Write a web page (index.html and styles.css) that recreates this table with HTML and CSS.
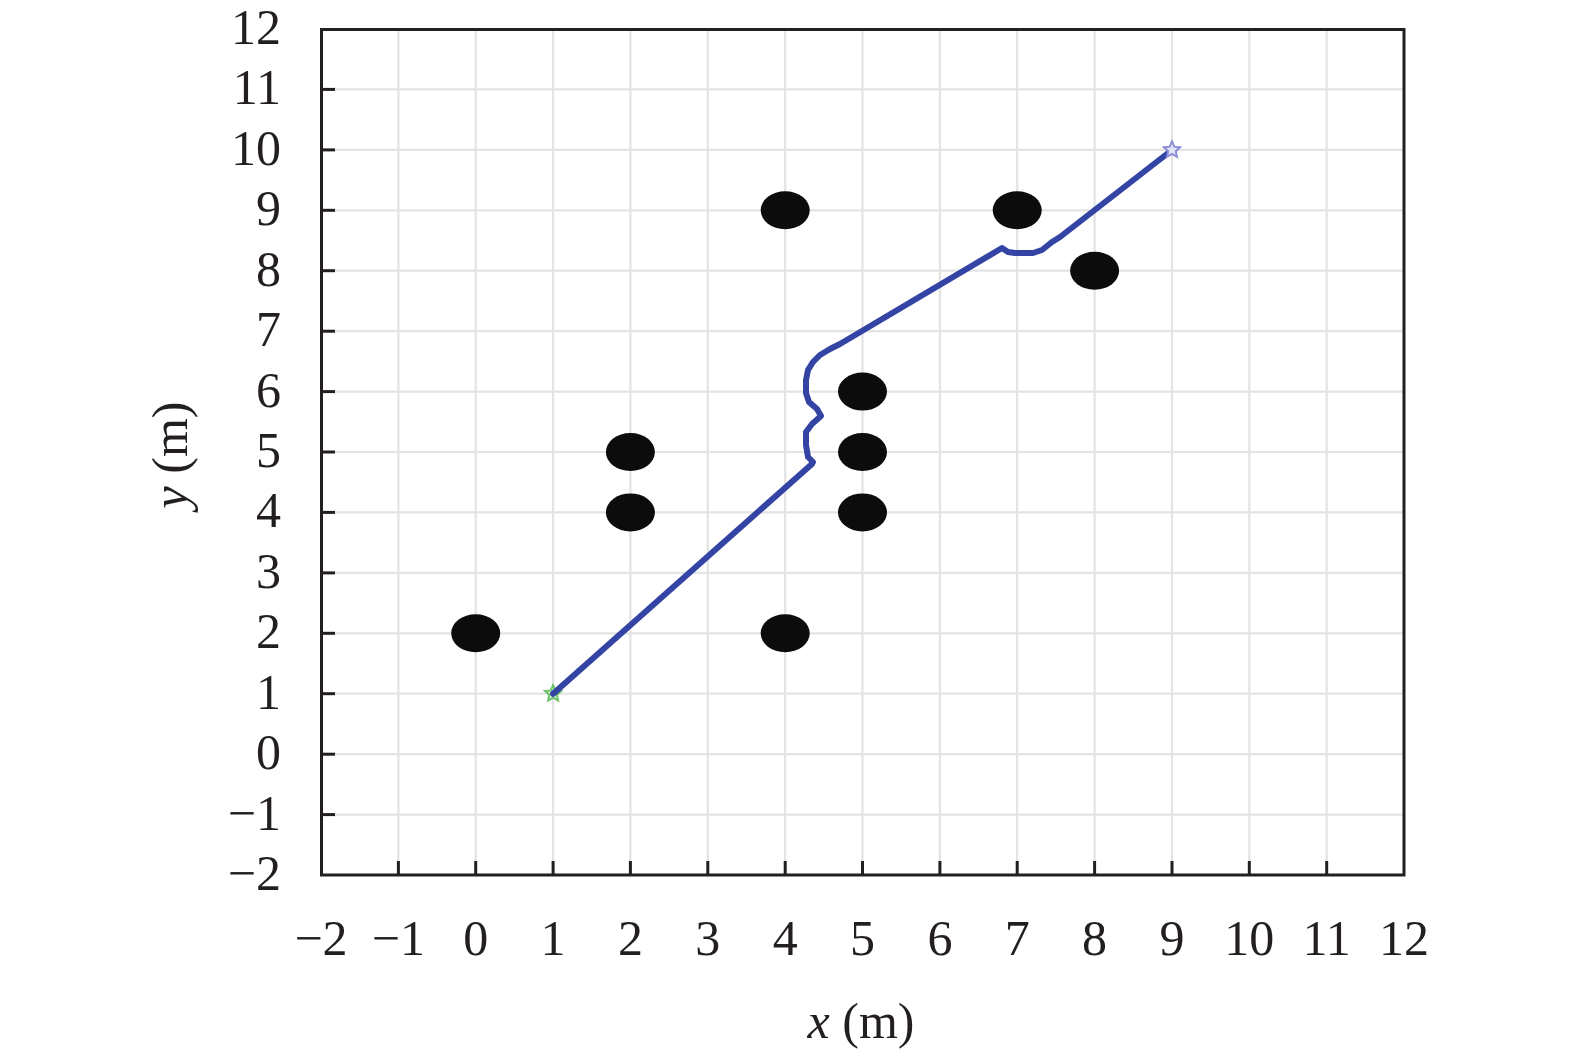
FILE: index.html
```html
<!DOCTYPE html>
<html lang="en">
<head>
<meta charset="utf-8">
<title>Path plot</title>
<link rel="stylesheet" href="styles.css">
</head>
<body>
<main class="figure">
<svg class="chart" viewBox="0 0 1575 1055" xmlns="http://www.w3.org/2000/svg">
  <g class="grid">
    <line x1="398.4" y1="29" x2="398.4" y2="875"/>
    <line x1="475.7" y1="29" x2="475.7" y2="875"/>
    <line x1="553.1" y1="29" x2="553.1" y2="875"/>
    <line x1="630.4" y1="29" x2="630.4" y2="875"/>
    <line x1="707.8" y1="29" x2="707.8" y2="875"/>
    <line x1="785.2" y1="29" x2="785.2" y2="875"/>
    <line x1="862.5" y1="29" x2="862.5" y2="875"/>
    <line x1="939.9" y1="29" x2="939.9" y2="875"/>
    <line x1="1017.2" y1="29" x2="1017.2" y2="875"/>
    <line x1="1094.6" y1="29" x2="1094.6" y2="875"/>
    <line x1="1172" y1="29" x2="1172" y2="875"/>
    <line x1="1249.3" y1="29" x2="1249.3" y2="875"/>
    <line x1="1326.7" y1="29" x2="1326.7" y2="875"/>
    <line x1="321" y1="89.4" x2="1404" y2="89.4"/>
    <line x1="321" y1="149.9" x2="1404" y2="149.9"/>
    <line x1="321" y1="210.3" x2="1404" y2="210.3"/>
    <line x1="321" y1="270.7" x2="1404" y2="270.7"/>
    <line x1="321" y1="331.2" x2="1404" y2="331.2"/>
    <line x1="321" y1="391.6" x2="1404" y2="391.6"/>
    <line x1="321" y1="452" x2="1404" y2="452"/>
    <line x1="321" y1="512.4" x2="1404" y2="512.4"/>
    <line x1="321" y1="572.9" x2="1404" y2="572.9"/>
    <line x1="321" y1="633.3" x2="1404" y2="633.3"/>
    <line x1="321" y1="693.7" x2="1404" y2="693.7"/>
    <line x1="321" y1="754.2" x2="1404" y2="754.2"/>
    <line x1="321" y1="814.6" x2="1404" y2="814.6"/>
  </g>

  <g class="ticks">
    <line x1="322" y1="89.4" x2="335" y2="89.4"/>
    <line x1="322" y1="149.9" x2="335" y2="149.9"/>
    <line x1="322" y1="210.3" x2="335" y2="210.3"/>
    <line x1="322" y1="270.7" x2="335" y2="270.7"/>
    <line x1="322" y1="331.2" x2="335" y2="331.2"/>
    <line x1="322" y1="391.6" x2="335" y2="391.6"/>
    <line x1="322" y1="452" x2="335" y2="452"/>
    <line x1="322" y1="512.4" x2="335" y2="512.4"/>
    <line x1="322" y1="572.9" x2="335" y2="572.9"/>
    <line x1="322" y1="633.3" x2="335" y2="633.3"/>
    <line x1="322" y1="693.7" x2="335" y2="693.7"/>
    <line x1="322" y1="754.2" x2="335" y2="754.2"/>
    <line x1="322" y1="814.6" x2="335" y2="814.6"/>
    <line x1="398.4" y1="874" x2="398.4" y2="861"/>
    <line x1="475.7" y1="874" x2="475.7" y2="861"/>
    <line x1="553.1" y1="874" x2="553.1" y2="861"/>
    <line x1="630.4" y1="874" x2="630.4" y2="861"/>
    <line x1="707.8" y1="874" x2="707.8" y2="861"/>
    <line x1="785.2" y1="874" x2="785.2" y2="861"/>
    <line x1="862.5" y1="874" x2="862.5" y2="861"/>
    <line x1="939.9" y1="874" x2="939.9" y2="861"/>
    <line x1="1017.2" y1="874" x2="1017.2" y2="861"/>
    <line x1="1094.6" y1="874" x2="1094.6" y2="861"/>
    <line x1="1172" y1="874" x2="1172" y2="861"/>
    <line x1="1249.3" y1="874" x2="1249.3" y2="861"/>
    <line x1="1326.7" y1="874" x2="1326.7" y2="861"/>
  </g>

  <rect class="frame" x="321.5" y="29.5" width="1082.5" height="845.5"/>

  <g class="obstacles">
    <ellipse cx="475.7" cy="633.3" rx="24.5" ry="19"/>
    <ellipse cx="630.4" cy="452" rx="24.5" ry="19"/>
    <ellipse cx="630.4" cy="512.4" rx="24.5" ry="19"/>
    <ellipse cx="785.2" cy="210.3" rx="24.5" ry="19"/>
    <ellipse cx="785.2" cy="633.3" rx="24.5" ry="19"/>
    <ellipse cx="862.5" cy="391.6" rx="24.5" ry="19"/>
    <ellipse cx="862.5" cy="452" rx="24.5" ry="19"/>
    <ellipse cx="862.5" cy="512.4" rx="24.5" ry="19"/>
    <ellipse cx="1017.2" cy="210.3" rx="24.5" ry="19"/>
    <ellipse cx="1094.6" cy="270.7" rx="24.5" ry="19"/>
  </g>

  <polygon class="start-mark" transform="translate(553.1 693.7)" points="0,-8.5 2.35,-3.24 8.08,-2.63 3.8,1.24 5,6.88 0,4 -5,6.88 -3.8,1.24 -8.08,-2.63 -2.35,-3.24"/>

  <polyline class="route" points="553.1,693.7 812,464 813,462 808,457 806,445 806,432 812,424 821,416 817,409 809,402 806,393 806,380 808,370 813,362 820,355 830,349 840,344 1002,248 1008,252 1015,253 1033,253 1042,250 1047,246 1052,242 1060,237 1172,150"/>

  <polygon class="end-mark" transform="translate(1172 149.9)" points="0,-8.5 2.35,-3.24 8.08,-2.63 3.8,1.24 5,6.88 0,4 -5,6.88 -3.8,1.24 -8.08,-2.63 -2.35,-3.24"/>

  <g class="xlabels">
    <text x="321" y="955">−2</text>
    <text x="398.4" y="955">−1</text>
    <text x="475.7" y="955">0</text>
    <text x="553.1" y="955">1</text>
    <text x="630.4" y="955">2</text>
    <text x="707.8" y="955">3</text>
    <text x="785.2" y="955">4</text>
    <text x="862.5" y="955">5</text>
    <text x="939.9" y="955">6</text>
    <text x="1017.2" y="955">7</text>
    <text x="1094.6" y="955">8</text>
    <text x="1172" y="955">9</text>
    <text x="1249.3" y="955">10</text>
    <text x="1326.7" y="955">11</text>
    <text x="1404" y="955">12</text>
  </g>

  <g class="ylabels">
    <text x="281" y="44">12</text>
    <text x="281" y="104.4">11</text>
    <text x="281" y="164.9">10</text>
    <text x="281" y="225.3">9</text>
    <text x="281" y="285.7">8</text>
    <text x="281" y="346.2">7</text>
    <text x="281" y="406.6">6</text>
    <text x="281" y="467">5</text>
    <text x="281" y="527.4">4</text>
    <text x="281" y="587.9">3</text>
    <text x="281" y="648.3">2</text>
    <text x="281" y="708.7">1</text>
    <text x="281" y="769.2">0</text>
    <text x="281" y="829.6">−1</text>
    <text x="281" y="890">−2</text>
  </g>

  <text class="axis-title" x="861" y="1038"><tspan class="var">x</tspan> (m)</text>
  <text class="axis-title" transform="translate(187 455) rotate(-90)"><tspan class="var">y</tspan> (m)</text>
</svg>
</main>
</body>
</html>
```

FILE: styles.css
```css
html, body {
  margin: 0;
  padding: 0;
  background: #ffffff;
  overflow: hidden;
}

.figure {
  display: block;
  width: 1575px;
  height: 1055px;
  overflow: hidden;
}

.chart {
  display: block;
  width: 1575px;
  height: 1055px;
  font-family: "Liberation Serif", "Times New Roman", serif;
}

.grid line {
  stroke: #e3e3e3;
  stroke-width: 2.2;
}

.ticks line {
  stroke: #231f20;
  stroke-width: 3;
}

.frame {
  fill: none;
  stroke: #231f20;
  stroke-width: 3;
}

.obstacles ellipse {
  fill: #0c0c0c;
}

.route {
  fill: none;
  stroke: #3344a4;
  stroke-width: 6;
  stroke-linejoin: round;
  stroke-linecap: round;
}

.start-mark {
  fill: #d8f0d6;
  stroke: #6cc26a;
  stroke-width: 2;
}

.end-mark {
  fill: #e4e4f6;
  stroke: #8c8fd6;
  stroke-width: 2;
}

.xlabels text {
  font-size: 50px;
  fill: #231f20;
  text-anchor: middle;
}

.ylabels text {
  font-size: 50px;
  fill: #231f20;
  text-anchor: end;
}

.axis-title {
  font-size: 50px;
  fill: #231f20;
  text-anchor: middle;
}

.axis-title .var {
  font-style: italic;
}
```
